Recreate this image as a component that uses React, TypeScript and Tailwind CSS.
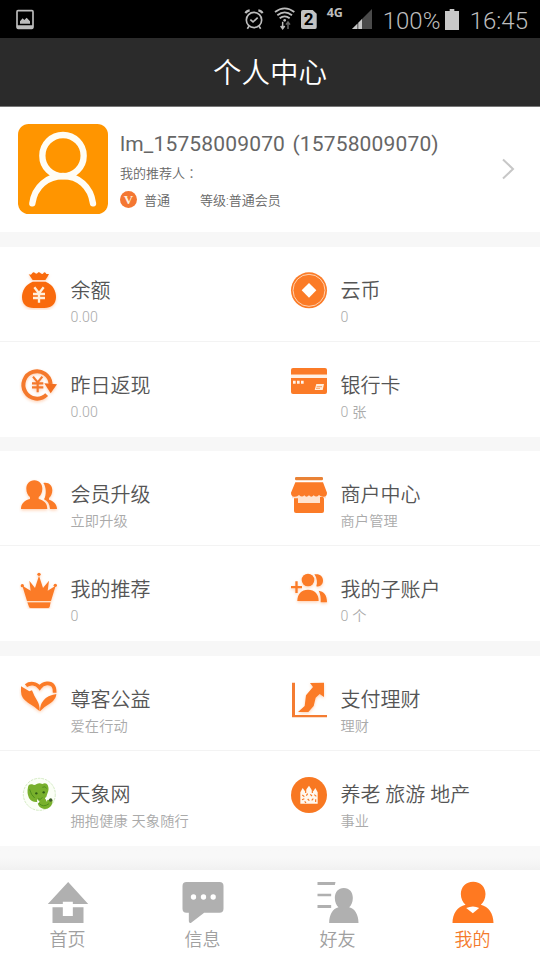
import type { ReactNode } from "react";

type Entry = {
  id: string;
  title: string;
  subtitle: string;
  icon: ReactNode;
};

const ORANGE = "#fb7b27";

function Icon({ y, children }: { y: number; children: ReactNode }) {
  return (
    <svg
      viewBox={`57 ${y} 120 120`}
      className="w-10 h-10 shrink-0"
      fill={ORANGE}
      aria-hidden="true"
    >
      {children}
    </svg>
  );
}

const glow = { filter: "drop-shadow(0 4px 4px rgba(251,123,39,0.35))" };

const groups: Entry[][] = [
  [
    {
      id: "balance",
      title: "余额",
      subtitle: "0.00",
      icon: (
        <Icon y={90}>
          <g fill="#f96a0c" style={glow}>
            <path d="M86 102Q93 107 97 99Q101 94 105 99Q110 104 115 97Q119 96 122 100Q128 105 131 98Q136 95 139 102L147 102Q142 113 136 120H98Q92 112 86 102Z" />
            <path d="M98 125H137C158 133 168 152 168 171C168 193 153 204 133 204H101C80 204 66 193 66 171C66 152 77 133 98 125Z" />
          </g>
          <path
            d="M103 142L117 160L131 142M99 162H135M99 174H135M117 160V188"
            fill="none"
            stroke="#fff0dc"
            strokeWidth="7"
          />
        </Icon>
      ),
    },
    {
      id: "coin",
      title: "云币",
      subtitle: "0",
      icon: (
        <Icon y={90}>
          <circle cx="117" cy="151" r="54" />
          <circle cx="117" cy="151" r="48" fill="none" stroke="#ffe3cd" strokeWidth="2.5" />
          <path d="M117 129L139 151L117 173L95 151Z" fill="#fff" />
        </Icon>
      ),
    },
    {
      id: "cashback",
      title: "昨日返现",
      subtitle: "0.00",
      icon: (
        <Icon y={375}>
          <g style={glow}>
            <path
              d="M140 464A41 41 0 1 1 152 432"
              fill="none"
              stroke="#f4792c"
              strokeWidth="12"
            />
            <path d="M133 430L171 433L152 460Z" fill="#f26f20" />
            <path
              d="M99 410L113 427L127 410M96 430H130M96 442H130M113 427V457"
              fill="none"
              stroke="#f4792c"
              strokeWidth="6.5"
            />
          </g>
        </Icon>
      ),
    },
    {
      id: "card",
      title: "银行卡",
      subtitle: "0 张",
      icon: (
        <Icon y={375}>
          <path d="M69 384H165Q171 384 171 390V404H63V390Q63 384 69 384Z" />
          <path d="M63 414H171V456Q171 462 165 462H69Q63 462 63 456Z" />
          <path d="M63 404H171V414H63Z" fill="#fff1e5" />
          <path d="M69 422H77V431H69ZM81 422H89V431H81ZM93 422H101V431H93Z" fill="#fff4ea" />
          <path d="M139 432H162L158 450H134Z" fill="#ffeedd" />
          <path d="M140 440H156M138 445H150" stroke={ORANGE} strokeWidth="2" />
        </Icon>
      ),
    },
  ],
  [
    {
      id: "upgrade",
      title: "会员升级",
      subtitle: "立即升级",
      icon: (
        <Icon y={87}>
          <g style={glow}>
            <path d="M130 114C147 111 157 122 157 136C157 147 152 155 147 159V164C160 168 171 177 171 192H150C149 177 143 168 132 163C140 151 139 125 130 114Z" />
            <path d="M103 106C118 106 127 117 127 131C127 143 122 151 116 156V162C131 166 142 174 142 192H63C63 176 74 166 90 162V156C84 151 79 143 79 131C79 117 88 106 103 106Z" />
          </g>
        </Icon>
      ),
    },
    {
      id: "merchant",
      title: "商户中心",
      subtitle: "商户管理",
      icon: (
        <Icon y={87}>
          <rect x="75" y="96" width="84" height="10" rx="4" fill="#e98235" />
          <path d="M72 156H162V198Q162 204 156 204H78Q72 204 72 198Z" />
          <path d="M66 150H168V160H160V156H150V174H84V160H66Z" fill="#ffe4d0" />
          <path d="M76 112H159L171 143Q171 155 161 155Q152 156 147 150Q139 159 131 151Q124 159 117 151Q109 159 103 151Q96 159 87 150Q82 156 72 155Q63 154 63 143Z" />
        </Icon>
      ),
    },
    {
      id: "referral",
      title: "我的推荐",
      subtitle: "0",
      icon: (
        <Icon y={372}>
          <g style={glow}>
            <path d="M67 422L92 437L88 407L105 429L117 392L129 429L147 407L143 437L167 422L153 468H81Z" />
            <circle cx="117" cy="388" r="5" />
            <circle cx="67" cy="422" r="5" />
            <circle cx="166" cy="421" r="5" />
            <path d="M82 472H152L149 485Q148 489 144 489H92Q88 489 87 485Z" />
          </g>
          <path d="M81 470H154" stroke="#ffe0c6" strokeWidth="3" />
        </Icon>
      ),
    },
    {
      id: "sub-account",
      title: "我的子账户",
      subtitle: "0 个",
      icon: (
        <Icon y={372}>
          <g style={glow}>
            <path d="M63 423H76V409H83V423H96V430H83V444H76V430H63Z" />
            <path d="M133 388C149 385 159 394 159 406C159 420 149 427 139 424C143 412 141 399 133 388Z" />
            <path d="M146 437C161 439 171 449 171 472H152C153 457 151 447 146 437Z" />
            <ellipse cx="114" cy="405" rx="19" ry="19" />
            <path d="M82 468C82 447 94 434 114 434C134 434 146 447 146 468Z" />
          </g>
        </Icon>
      ),
    },
  ],
  [
    {
      id: "charity",
      title: "尊客公益",
      subtitle: "爱在行动",
      icon: (
        <Icon y={87}>
          <g style={glow}>
            <path
              d="M78 107C91 97 109 100 119 113C130 97 152 97 159 107Q164 113 164 128"
              fill="none"
              stroke={ORANGE}
              strokeWidth="11"
            />
            <path d="M63 109L88 124L96 121L103 137L112 153Q119 163 119 184Q105 170 84 158Q63 145 63 124Z" />
            <path d="M169 132Q169 146 153 158Q132 170 120 184Q119 165 131 151Q142 136 169 132Z" />
          </g>
        </Icon>
      ),
    },
    {
      id: "finance",
      title: "支付理财",
      subtitle: "理财",
      icon: (
        <Icon y={87}>
          <path d="M66 98H75V195H171V202H66Z" fill="#f47c32" />
          <path
            d="M120 99L162 98V141L149 132L137 143L131 168L115 186H84L104 168L108 136L129 111Z"
            style={glow}
          />
        </Icon>
      ),
    },
    {
      id: "elephant",
      title: "天象网",
      subtitle: "拥抱健康 天象随行",
      icon: (
        <Icon y={372}>
          <circle
            cx="118"
            cy="433"
            r="48"
            fill="#fbfff6"
            stroke="#d3eac2"
            strokeWidth="3"
            strokeDasharray="8 3"
          />
          <path
            d="M84 412Q85 401 97 403Q103 407 110 402Q118 398 127 402Q138 396 143 405Q149 418 142 431Q140 441 135 444Q142 455 151 446L158 450Q157 468 147 473Q136 480 124 474Q113 468 113 456Q95 458 87 444Q80 429 84 412Z"
            fill="#78b02c"
          />
          <path
            d="M89 418Q93 435 104 444M114 446Q122 452 127 442M117 460Q130 474 147 461M127 412Q136 407 140 415"
            fill="none"
            stroke="#4f8f1c"
            strokeWidth="3"
          />
          <path d="M111 447L119 455L112 462ZM135 444L143 443L141 456Z" fill="#fff" />
          <circle cx="109" cy="430" r="3.5" fill="#315d16" />
          <circle cx="131" cy="427" r="3.5" fill="#315d16" />
          <circle cx="152" cy="450" r="5" fill="#3f5c2c" />
        </Icon>
      ),
    },
    {
      id: "business",
      title: "养老 旅游 地产",
      subtitle: "事业",
      icon: (
        <Icon y={372}>
          <circle cx="117" cy="435" r="54" fill="#f87822" />
          <path
            d="M91 461V427L98 414L105 424L109 418L117 407L125 419L130 424L136 414L143 427V461Z"
            fill="#fff8ee"
          />
          <path
            d="M107 413V429M127 413V429M97 435L103 440M113 431L109 437M121 433L126 438M133 434L139 439M96 449L103 446M113 447L118 452M125 451L130 446M137 448V456M104 454L108 459"
            stroke="#f87822"
            strokeWidth="3.5"
          />
        </Icon>
      ),
    },
  ],
];

const tabs = [
  {
    label: "首页",
    icon: (
      <svg viewBox="136.5 120 132 132" className="w-11 h-11" fill="#b0b0b0">
        <path d="M203 126L263 192H217V185H187V192H142Z" />
        <path d="M156 202H187V228H217V202H249V249H156Z" />
      </svg>
    ),
  },
  {
    label: "信息",
    icon: (
      <svg viewBox="541.5 120 132 132" className="w-11 h-11" fill="#b0b0b0">
        <path d="M558 126H657Q669 126 669 138V206Q669 218 657 218H611L571 249Q565 250 565 244V218H558Q546 218 546 206V138Q546 126 558 126Z" />
        <circle cx="579" cy="171" r="8" fill="#fff" />
        <circle cx="609" cy="171" r="8" fill="#fff" />
        <circle cx="638" cy="171" r="8" fill="#fff" />
      </svg>
    ),
  },
  {
    label: "好友",
    icon: (
      <svg viewBox="136.5 120 132 132" className="w-11 h-11" fill="#b0b0b0">
        <path d="M141 126H195L193 135H141ZM141 161H182V169H141ZM141 195H182V204H141Z" />
        <path d="M220 144C237 144 247 157 247 174C247 187 242 196 236 202C253 206 264 224 264 249H176C176 224 187 206 204 202C198 196 193 187 193 174C193 157 203 144 220 144Z" />
      </svg>
    ),
  },
  {
    label: "我的",
    active: true,
    icon: (
      <svg viewBox="541.5 120 132 132" className="w-11 h-11" fill="#ff7921">
        <path d="M608 125C630 125 645 141 645 162C645 176 639 187 631 194C654 199 669 221 669 249H546C546 221 561 199 585 194C577 187 571 176 571 162C571 141 586 125 608 125Z" />
        <path d="M587 204Q608 195 626 204L607 220Z" fill="#fff" />
      </svg>
    ),
  },
];

function StatusBar() {
  return (
    <div className="flex h-[38px] items-center justify-between bg-black pl-[15px] pr-[13px] text-[#bdbdbd]">
      <svg viewBox="45 24 60 66" className="w-5 h-[22px]">
        <rect x="51" y="32" width="48" height="53" rx="3" fill="none" stroke="#bdbdbd" strokeWidth="5" />
        <path d="M51 76H99V86H51ZM60 71V64L68 55L73 60L80 53L90 64V71Z" fill="#bdbdbd" />
      </svg>
      <div className="flex h-full items-center">
        {/* alarm */}
        <svg viewBox="12 24 60 66" className="w-5 h-[22px]" fill="none" stroke="#bdbdbd" strokeWidth="5">
          <circle cx="42" cy="60" r="23" />
          <path d="M31 59L39 66L53 53" />
          <path d="M17 40Q19 32 29 31M67 40Q65 32 55 31" strokeWidth="7" />
          <path d="M27 79L22 86M57 79L62 86" strokeWidth="5" />
        </svg>
        {/* wifi */}
        <svg viewBox="102 18 66 78" className="ml-2.5 w-[22px] h-[26px]" fill="none" stroke="#bdbdbd" strokeWidth="5.5">
          <path d="M105 36Q134 14 163 36M112 46Q134 28 156 46M119 55Q134 43 149 55" />
          <circle cx="134" cy="61" r="4" fill="#bdbdbd" stroke="none" />
          <path d="M128 65V84M122 78L128 86L134 78" strokeWidth="4.5" />
          <path d="M144 87V68M138 74L144 66L150 74" stroke="#666" strokeWidth="4.5" />
        </svg>
        {/* sim */}
        <span className="ml-[5px] mt-px flex h-[19px] w-4 items-center justify-center rounded-[2px] bg-[#c2c2c2] [clip-path:polygon(0_0,75%_0,100%_20%,100%_100%,0_100%)] font-['Roboto',sans-serif] text-[17px] font-bold leading-none text-black">
          2
        </span>
        <span className="ml-2.5 mb-[11px] w-[17px] font-['Open_Sans',sans-serif] text-[12.5px] font-bold leading-none">
          4G
        </span>
        <svg viewBox="333 24 60 66" className="ml-2 w-5 h-[22px]">
          <path d="M333 87L393 27V87Z" fill="#4a4a4a" />
          <path d="M333 87L349 71V87ZM352 68L363 57V87H352Z" fill="#c8c8c8" />
        </svg>
        <span className="ml-[11px] mt-[3px] w-[59px] font-['Roboto',sans-serif] text-[24px] font-light leading-none">
          100%
        </span>
        <svg viewBox="612 21 42 69" className="ml-[3px] w-3.5 h-[23px]" fill="#c8c8c8">
          <path d="M612 30H626V24H640V30H654V87H612Z" />
        </svg>
        <span className="ml-[11px] -mr-px mt-[3px] font-['Roboto',sans-serif] text-[24px] font-light leading-none">
          16:45
        </span>
      </div>
    </div>
  );
}

function Profile() {
  return (
    <section className="flex h-[125px] pl-[18px] pt-[17px] text-[#666]">
      <svg viewBox="54 42 270 270" className="h-[90px] w-[90px] shrink-0">
        <rect x="54" y="42" width="270" height="270" rx="32" fill="#ff9500" />
        <g fill="none" stroke="#fffdf5" strokeWidth="19" strokeLinecap="round">
          <circle cx="189" cy="137" r="62" />
          <path d="M97 280C104 229 143 198 189 198C235 198 272 229 279 280" />
        </g>
      </svg>
      <div className="ml-3 grow">
        <h2 className="mt-[7px] text-[21px] leading-[26px] tracking-[0.16px] [word-spacing:2px] whitespace-nowrap">
          lm_15758009070 (15758009070)
        </h2>
        <p className="mt-1.5 text-[13px] font-[350] leading-5">
          我的推荐人<span className="font-['Noto_Sans_CJK_TC',sans-serif]">：</span>
        </p>
        <div className="mt-[7px] flex items-center text-[13px] font-[350] leading-5">
          <span className="mr-[7px] mb-[3px] flex h-[17px] w-[17px] items-center justify-center rounded-full bg-[#f47732] font-['Liberation_Serif',serif] text-[13px] font-bold text-[#fff0df]">
            V
          </span>
          <span className="w-14">普通</span>
          <span>等级:普通会员</span>
        </div>
      </div>
      <svg viewBox="0 0 14 22" className="mr-[25px] mt-[34px] h-[22px] w-3.5">
        <path d="M2 1.5L12 11L2 20.5" fill="none" stroke="#c7c7c7" strokeWidth="2" />
      </svg>
    </section>
  );
}

function Cell({ entry }: { entry: Entry }) {
  return (
    <a className="flex h-[95px] pl-[19px] pt-[23px]">
      {entry.icon}
      <div className="ml-[11.5px] whitespace-nowrap">
        <h3 className="mt-[7px] text-[20px] font-[350] leading-7 text-[#555]">{entry.title}</h3>
        <p className="mt-0.5 text-[14.2px] font-[350] leading-5 tracking-[0.15px] text-[#aaa]">
          {entry.subtitle}
        </p>
      </div>
    </a>
  );
}

export default function App() {
  return (
    <div className="flex h-[960px] w-[540px] flex-col overflow-hidden bg-[#f7f7f7] font-['Roboto','Noto_Sans_CJK_SC',sans-serif]">
      <StatusBar />
      <header className="flex h-[69px] items-center justify-center border-b border-[#777] bg-[#2b2b2b] pt-1">
        <h1 className="text-[28.5px] font-[350] leading-none text-white">个人中心</h1>
      </header>

      <div className="bg-white">
        <Profile />
      </div>

      {groups.map((entries, index) => (
        <section
          key={index}
          className="relative mt-[15px] grid grid-cols-2 bg-white [&+section]:mt-3.5 [&+section+section]:mt-[15px]"
        >
          {entries.map((entry) => (
            <Cell key={entry.id} entry={entry} />
          ))}
          <div className="absolute inset-x-0 top-[94px] h-px bg-[#f3f3f3]" />
        </section>
      ))}

      <div className="h-6 bg-gradient-to-b from-[#f8f8f8] from-50% to-[#f1f1f1]" />

      <nav className="grid h-[90px] grid-cols-4 bg-white">
        {tabs.map((tab) => (
          <button
            key={tab.label}
            className={`flex flex-col items-center pt-2.5 ${
              tab.active ? "text-[#f47a2b]" : "text-[#a0a0a0]"
            }`}
          >
            {tab.icon}
            <span className="mt-0.5 text-[18px] font-[350] leading-7">{tab.label}</span>
          </button>
        ))}
      </nav>
    </div>
  );
}
